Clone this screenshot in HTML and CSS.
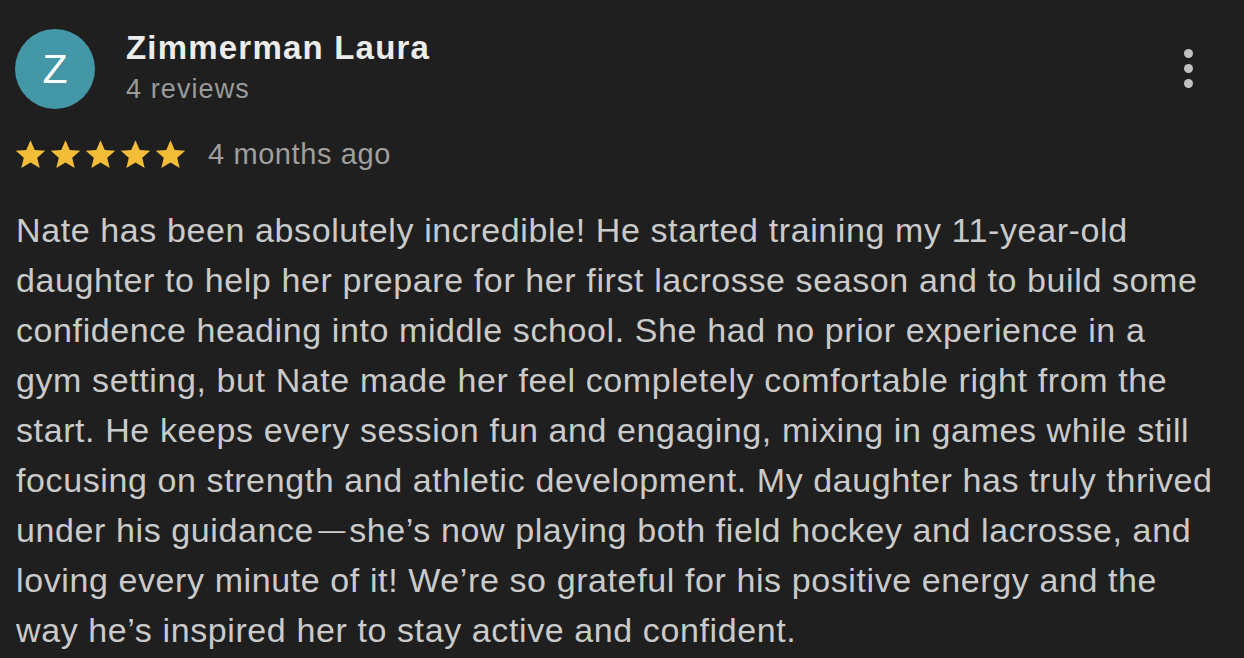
FILE: index.html
```html
<!DOCTYPE html>
<html lang="en">
<head>
<meta charset="utf-8">
<title>Review</title>
<link rel="stylesheet" href="styles.css">
</head>
<body>
<div class="review">
  <div class="header">
    <div class="avatar">Z</div>
    <div class="who">
      <div class="name">Zimmerman Laura</div>
      <div class="count">4 reviews</div>
    </div>
    <div class="more" aria-label="More options"><span></span><span></span><span></span></div>
  </div>
  <div class="meta">
    <div class="stars">
      <svg viewBox="0 0 24 24"><path d="M12 2.3l2.9 6.6 7.2.6-5.5 4.7 1.7 7-6.3-3.8-6.3 3.8 1.7-7L1.9 9.5l7.2-.6z"/></svg>
      <svg viewBox="0 0 24 24"><path d="M12 2.3l2.9 6.6 7.2.6-5.5 4.7 1.7 7-6.3-3.8-6.3 3.8 1.7-7L1.9 9.5l7.2-.6z"/></svg>
      <svg viewBox="0 0 24 24"><path d="M12 2.3l2.9 6.6 7.2.6-5.5 4.7 1.7 7-6.3-3.8-6.3 3.8 1.7-7L1.9 9.5l7.2-.6z"/></svg>
      <svg viewBox="0 0 24 24"><path d="M12 2.3l2.9 6.6 7.2.6-5.5 4.7 1.7 7-6.3-3.8-6.3 3.8 1.7-7L1.9 9.5l7.2-.6z"/></svg>
      <svg viewBox="0 0 24 24"><path d="M12 2.3l2.9 6.6 7.2.6-5.5 4.7 1.7 7-6.3-3.8-6.3 3.8 1.7-7L1.9 9.5l7.2-.6z"/></svg>
    </div>
    <span class="when">4 months ago</span>
  </div>
  <p class="text">Nate has been absolutely incredible! He started training my 11-year-old daughter to help her prepare for her first lacrosse season and to build some confidence heading into middle school. She had no prior experience in a gym setting, but Nate made her feel completely comfortable right from the start. He keeps every session fun and engaging, mixing in games while still focusing on strength and athletic development. My daughter has truly thrived under his guidance<span class="dash">—</span>she’s now playing both field hockey and lacrosse, and loving every minute of it! We’re so grateful for his positive energy and the way he’s inspired her to stay active and confident.</p>
</div>
</body>
</html>
```

FILE: styles.css
```css
html, body {
  margin: 0;
  padding: 0;
  background: #1f1f1f;
}
body {
  font-family: "Liberation Sans", Arial, sans-serif;
  color: #c9c9c9;
  width: 1244px;
  height: 658px;
  overflow: hidden;
}
.review {
  padding: 29px 0 0 16px;
}
.header {
  display: flex;
  align-items: flex-start;
}
.avatar {
  width: 80px;
  height: 80px;
  margin-left: -1px;
  border-radius: 50%;
  background: #4397a6;
  color: #ffffff;
  font-size: 41px;
  line-height: 80px;
  text-align: center;
  flex: none;
}
.who {
  margin-left: 31px;
  padding-top: 1px;
}
.name {
  font-size: 33px;
  font-weight: bold;
  letter-spacing: 1.2px;
  color: #ececec;
  line-height: 36px;
}
.count {
  margin-top: 5px;
  font-size: 27px;
  letter-spacing: 1.1px;
  color: #9a9a9a;
  line-height: 36px;
}
.more {
  margin-left: auto;
  margin-right: 51px;
  margin-top: 20px;
  display: flex;
  flex-direction: column;
  gap: 6px;
}
.more span {
  width: 9px;
  height: 9px;
  border-radius: 50%;
  background: #c2c2c2;
}
.meta {
  display: flex;
  align-items: center;
  margin-top: 25px;
  height: 40px;
}
.stars {
  display: flex;
  margin-left: -3px;
}
.stars svg {
  width: 35px;
  height: 35px;
  fill: #f4bd38;
}
.when {
  margin-left: 20px;
  font-size: 29px;
  letter-spacing: 0.6px;
  color: #9f9f9f;
}
.text {
  margin: 31px 0 0 0;
  padding-right: 27px;
  font-size: 34px;
  letter-spacing: 0.6px;
  line-height: 50px;
  color: #cacaca;
}
.dash {
  margin: 0 4px;
  font-size: 27px;
  line-height: 0;
  vertical-align: 3px;
  letter-spacing: 0;
}
```
